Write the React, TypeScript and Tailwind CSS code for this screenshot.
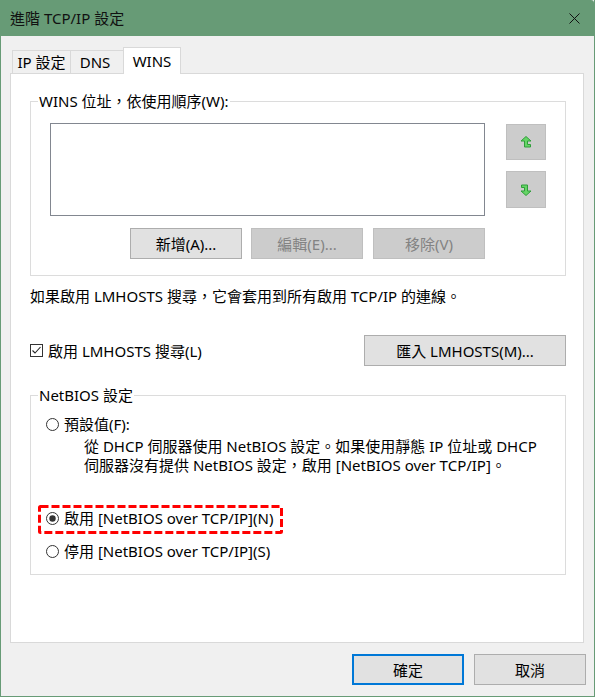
import type { ReactNode } from "react";

function Button({
  children,
  disabled,
  focused,
  className = "",
}: {
  children: ReactNode;
  disabled?: boolean;
  focused?: boolean;
  className?: string;
}) {
  const look = disabled
    ? "bg-[#cccccc] border border-[#bfbfbf] text-[#838383]"
    : focused
      ? "bg-[#e1e1e1] border-2 border-[#0078d7] text-black"
      : "bg-[#e1e1e1] border border-[#adadad] text-black";
  return (
    <div className={`flex h-[31px] items-center justify-center leading-[20px] ${look} ${className}`}>
      {children}
    </div>
  );
}

function HookArrow({ down }: { down?: boolean }) {
  return (
    <svg width="12" height="12" viewBox="0 0 12 12" className={down ? "rotate-180" : ""}>
      <polygon
        points="6,0.5 11,5 7.5,5 7.5,8.5 10.5,8.5 10.5,11 4.5,11 4.5,5 1,5"
        fill="#66d466"
        stroke="#2f9e3a"
        strokeWidth="1"
        strokeLinejoin="miter"
      />
    </svg>
  );
}

function Radio({ checked }: { checked?: boolean }) {
  return (
    <svg width="13" height="13" viewBox="0 0 13 13" className="shrink-0">
      <circle cx="6.5" cy="6.5" r="6" fill="#fff" stroke="#333" strokeWidth="1" />
      {checked && <circle cx="6.5" cy="6.5" r="3.2" fill="#333" />}
    </svg>
  );
}

function Checkbox() {
  return (
    <svg width="13" height="13" viewBox="0 0 13 13" className="shrink-0">
      <rect x="0.5" y="0.5" width="12" height="12" fill="#fff" stroke="#333" />
      <polyline points="2.5,6.5 5,9 10.5,3" fill="none" stroke="#222" strokeWidth="1.1" />
    </svg>
  );
}

function GroupBox({ title, className = "", children }: { title: string; className?: string; children: ReactNode }) {
  return (
    <div className={`relative ml-[19px] w-[536px] border border-[#dcdcdc] ${className}`}>
      <span className="absolute left-[7px] top-[-11px] bg-white px-px leading-[20px]">{title}</span>
      {children}
    </div>
  );
}

export default function App() {
  return (
    <div className="flex h-[697px] w-[595px] flex-col border-x border-b border-[#679b76] bg-[#f0f0f0] font-['Noto_Sans','Noto_Sans_CJK_TC',sans-serif] text-[15px] text-black">
      {/* title bar */}
      <div className="flex h-[36px] shrink-0 items-center justify-between rounded-tr-[3px] bg-[#679b76] pl-[9px] pr-[14px]">
        <span className="leading-[20px] text-[#111]">進階 TCP/IP 設定</span>
        <svg width="11" height="11" viewBox="0 0 11 11">
          <path d="M0.5 0.5 L10.5 10.5 M10.5 0.5 L0.5 10.5" stroke="#111" strokeWidth="1" />
        </svg>
      </div>

      <div className="flex flex-1 flex-col pl-[9px] pt-[11px]">
        {/* tabs */}
        <div className="ml-[2px] flex items-end">
          <div className="flex h-[23px] w-[59px] items-center justify-center border-x border-t border-[#d9d9d9] leading-[20px]">
            IP 設定
          </div>
          <div className="flex h-[23px] w-[52px] items-center justify-center border-t border-[#d9d9d9] pr-[4px] leading-[20px]">
            DNS
          </div>
          <div className="relative z-10 -mb-px flex h-[27px] w-[58px] items-center justify-center border-x border-t border-[#d9d9d9] bg-white pb-px leading-[20px]">
            WINS
          </div>
        </div>

        {/* tab panel */}
        <div className="h-[570px] w-[574px] border border-[#d9d9d9] bg-white">
          <GroupBox title="WINS 位址，依使用順序(W):" className="mt-[27px] pb-[16px] pl-[19px] pt-[21px]">
            <div className="flex">
              <div className="h-[93px] w-[435px] border border-[#828790] bg-white" />
              <div className="ml-[21px] flex flex-col">
                <div className="mt-px flex h-[36px] w-[40px] items-center justify-center border border-[#bfbfbf] bg-[#cccccc]">
                  <HookArrow />
                </div>
                <div className="mt-[11px] flex h-[37px] w-[40px] items-center justify-center border border-[#bfbfbf] bg-[#cccccc]">
                  <HookArrow down />
                </div>
              </div>
            </div>
            <div className="mt-[12px] flex w-[435px] justify-end">
              <Button className="w-[112px]">新增(A)...</Button>
              <Button disabled className="ml-[9px] w-[112px]">
                編輯(E)...
              </Button>
              <Button disabled className="ml-[10px] w-[112px]">
                移除(V)
              </Button>
            </div>
          </GroupBox>

          <p className="ml-[19px] mt-[10px] leading-[20px]">如果啟用 LMHOSTS 搜尋，它會套用到所有啟用 TCP/IP 的連線。</p>

          <div className="ml-[19px] mt-[29px] flex w-[536px] items-center justify-between">
            <div className="flex items-center gap-[5px] leading-[20px]">
              <Checkbox />
              <span>啟用 LMHOSTS 搜尋(L)</span>
            </div>
            <Button className="w-[202px]">匯入 LMHOSTS(M)...</Button>
          </div>

          <GroupBox title="NetBIOS 設定" className="mt-[29px] pb-[13px] pl-[15px] pt-[18px]">
            <div className="flex h-[20px] items-center gap-[5px]">
              <Radio />
              <span className="leading-[20px]">預設值(F):</span>
            </div>
            <p className="ml-[38px] mt-[3px] leading-[19px]">
              從 DHCP 伺服器使用 NetBIOS 設定。如果使用靜態 IP 位址或 DHCP
              <br />
              伺服器沒有提供 NetBIOS 設定，啟用 [NetBIOS over TCP/IP]。
            </p>
            <div className="relative mt-[33px] flex h-[20px] items-center gap-[5px]">
              <Radio checked />
              <span className="leading-[20px]">啟用 [NetBIOS over TCP/IP](N)</span>
              <svg className="absolute left-[-8px] top-[-3px]" width="245" height="29" viewBox="0 0 245 29">
                <rect x="1.5" y="1.5" width="242" height="26" rx="1" fill="none" stroke="#ff0000" strokeWidth="3" strokeDasharray="8 3" />
              </svg>
            </div>
            <div className="mt-[13px] flex h-[20px] items-center gap-[5px]">
              <Radio />
              <span className="leading-[20px]">停用 [NetBIOS over TCP/IP](S)</span>
            </div>
          </GroupBox>
        </div>

        {/* dialog buttons */}
        <div className="mt-[11px] flex justify-end gap-[10px] pr-[8px]">
          <Button focused className="w-[112px]">
            確定
          </Button>
          <Button className="w-[112px]">取消</Button>
        </div>
      </div>
    </div>
  );
}
